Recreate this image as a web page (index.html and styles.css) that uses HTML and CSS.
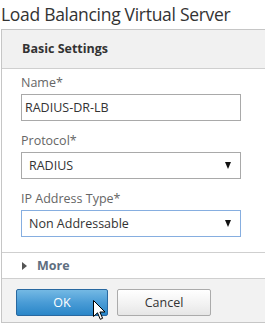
FILE: index.html
```html
<!DOCTYPE html>
<html>
<head>
<meta charset="utf-8">
<link rel="stylesheet" href="styles.css">
</head>
<body>
<h1 class="title">Load Balancing Virtual Server</h1>
<div class="panel">
  <div class="panel-head">Basic Settings</div>
  <div class="panel-body">
    <div class="field">
      <label class="label">Name*</label>
      <div class="input">RADIUS-DR-LB</div>
    </div>
    <div class="field">
      <label class="label">Protocol*</label>
      <div class="input select"><span>RADIUS</span><span class="caret"></span></div>
    </div>
    <div class="field">
      <label class="label">IP Address Type*</label>
      <div class="input select focused"><span>Non Addressable</span><span class="caret"></span></div>
    </div>
  </div>
  <div class="more"><span class="more-arrow"></span><span class="more-text">More</span></div>
  <div class="footer">
    <div class="btn btn-primary">OK</div>
    <div class="btn btn-default">Cancel</div>
    <svg class="cursor" width="14" height="22" viewBox="0 0 14 22">
      <path d="M0.5 0.5 L0.5 16.5 L4.5 12.8 L7.3 19.3 L9.6 18.3 L6.9 12 L12 12 Z" fill="#fff" stroke="#000" stroke-width="1" stroke-linejoin="miter"/>
    </svg>
  </div>
</div>
</body>
</html>
```

FILE: styles.css
```css
html, body {
  margin: 0;
  padding: 0;
  background: #fff;
  overflow: hidden;
}
body {
  width: 265px;
  height: 323px;
  font-family: "Open Sans", "Noto Sans", sans-serif;
  color: #333;
}
.title {
  margin: 0;
  padding: 1px 0 0 1px;
  height: 28px;
  font-size: 17.5px;
  font-weight: 400;
  line-height: 26px;
  color: #333;
  letter-spacing: -0.3px;
}
.panel {
  margin-left: 1px;
  width: 263px;
  border: 1px solid #c6c6c6;
  border-right: none;
}
.panel-head {
  height: 38px;
  background: #f1f1f1;
  border-bottom: 1px solid #cfcfcf;
  padding-left: 20px;
  font-size: 12.5px;
  font-weight: 700;
  line-height: 38px;
  color: #333;
}
.panel-body {
  padding: 5px 0 15px 19px;
  display: flex;
  flex-direction: column;
  gap: 11px;
  border-bottom: 1px solid #cfcfcf;
}
.field {
  display: flex;
  flex-direction: column;
  gap: 2px;
}
.label {
  font-size: 12.5px;
  line-height: 18px;
  color: #666;
}
.input {
  box-sizing: border-box;
  width: 220px;
  height: 27px;
  border: 1px solid #a9a9a9;
  padding: 0 8px 0 3px;
  font-size: 12.5px;
  line-height: 25px;
  color: #333;
  background: #fff;
}
.select {
  display: flex;
  justify-content: space-between;
  align-items: center;
  padding-left: 7px;
}
.focused {
  border-color: #86aee0;
}
.caret {
  width: 0;
  height: 0;
  border-left: 3.5px solid transparent;
  border-right: 3.5px solid transparent;
  border-top: 7px solid #111;
  margin-right: 1px;
}
.more {
  height: 25px;
  display: flex;
  align-items: center;
  padding-left: 20px;
  border-bottom: 1px solid #cfcfcf;
}
.more-arrow {
  width: 0;
  height: 0;
  border-top: 4.5px solid transparent;
  border-bottom: 4.5px solid transparent;
  border-left: 5px solid #555;
  margin-right: 10px;
}
.more-text {
  font-size: 12.5px;
  font-weight: 700;
  color: #5e6e80;
}
.footer {
  position: relative;
  height: 44px;
  box-sizing: border-box;
  background: #f2f2f2;
  border-bottom: 1px solid #c6c6c6;
  padding: 10px 0 0 14px;
  display: flex;
  gap: 9px;
  align-items: flex-start;
}
.btn {
  box-sizing: border-box;
  height: 27px;
  font-size: 12.5px;
  line-height: 25px;
  text-align: center;
  border-radius: 2px;
}
.btn-primary {
  width: 92px;
  color: #fff;
  background: linear-gradient(to bottom, #74b9e4 0%, #4a9cd6 50%, #2a86c8 100%);
  border: 1px solid #2868a0;
}
.btn-default {
  width: 94px;
  color: #333;
  background: linear-gradient(to bottom, #ffffff 0%, #f1f1f1 60%, #e6e6e6 100%);
  border: 1px solid #ababab;
}
.cursor {
  position: absolute;
  left: 91px;
  top: 21px;
}
```
